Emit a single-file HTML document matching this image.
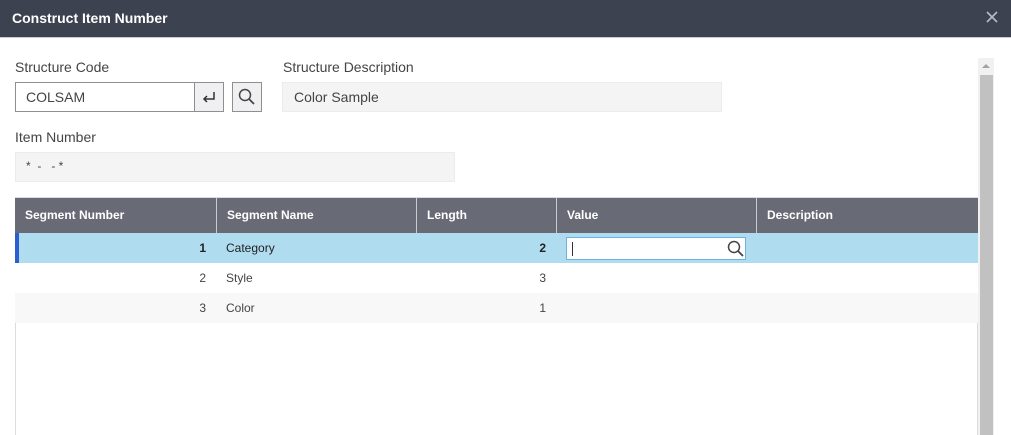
<!DOCTYPE html><html style="overflow:hidden;height:435px"><head><style>
body{margin:0;width:1011px;height:435px;overflow:hidden;background:#fff;font-family:"Liberation Sans",Arial,sans-serif;position:relative}
.a{position:absolute}
.hdr{left:0;top:0;width:1011px;height:38px;background:#3d4250;border-bottom:1px solid #c9ccd2;box-sizing:border-box}
.lbl{font-size:14px;color:#444}
.ro{background:#f4f4f4;border:1px solid #ececec;box-sizing:border-box;font-size:14px;color:#444}
.th{top:198px;height:35px;background:#686b76;color:#fff;font-weight:bold;font-size:12px;line-height:35px;box-sizing:border-box;padding-left:10px;border-right:1px solid #c9cbd0}
.row{left:15px;width:963px;height:30px;font-size:12px;color:#444;line-height:30px}
.c{position:absolute;top:0}
</style></head><body>
<div class="a hdr"></div>
<div class="a" style="left:12px;top:10px;color:#fff;font-weight:bold;font-size:14px">Construct Item Number</div>
<svg class="a" style="left:986px;top:11px" width="12" height="12"><path d="M1 1L11 11M11 1L1 11" stroke="#b8bcc4" stroke-width="1.6"/></svg>

<div class="a lbl" style="left:15px;top:59px">Structure Code</div>
<div class="a" style="left:15px;top:82px;width:209px;height:30px;border:1px solid #8f8f8f;box-sizing:border-box;font-size:14px;color:#444;line-height:28px;padding-left:10px">COLSAM</div>
<div class="a" style="left:194px;top:82px;width:30px;height:30px;border:1px solid #8f8f8f;box-sizing:border-box;background:#f0f0f2"></div>
<svg class="a" style="left:201px;top:90px" width="16" height="14"><path d="M13 2V9H3M6 6L3 9L6 12" fill="none" stroke="#333" stroke-width="1.5"/></svg>
<div class="a" style="left:232px;top:82px;width:30px;height:30px;border:1px solid #8f8f8f;box-sizing:border-box;background:#f0f0f2"></div>
<svg class="a" style="left:238px;top:88px" width="18" height="18"><circle cx="7" cy="7" r="5.5" fill="none" stroke="#444" stroke-width="1.5"/><path d="M11 11L16 16" stroke="#444" stroke-width="1.8"/></svg>

<div class="a lbl" style="left:283px;top:59px">Structure Description</div>
<div class="a ro" style="left:282px;top:82px;width:440px;height:30px;line-height:28px;padding-left:11px">Color Sample</div>

<div class="a lbl" style="left:15px;top:129px">Item Number</div>
<div class="a ro" style="left:15px;top:152px;width:440px;height:30px;line-height:26px;padding-left:10px;font-size:12px">*&nbsp; -&nbsp;&nbsp; - *</div>

<div class="a" style="left:15px;top:197px;width:963px;height:238px;border:1px solid #dcdcdc;border-bottom:none;box-sizing:border-box"></div>
<div class="a th" style="left:15px;width:202px">Segment Number</div>
<div class="a th" style="left:217px;width:200px">Segment Name</div>
<div class="a th" style="left:417px;width:140px">Length</div>
<div class="a th" style="left:557px;width:200px">Value</div>
<div class="a th" style="left:757px;width:221px;border-right:none">Description</div>

<div class="a row" style="top:233px;background:#b0dcf0;color:#222">
<div class="c" style="left:0;width:4px;height:30px;background:#2b5fd0"></div>
<div class="c" style="left:0;width:191px;text-align:right;font-weight:bold">1</div>
<div class="c" style="left:211px">Category</div>
<div class="c" style="left:402px;width:129px;text-align:right;font-weight:bold">2</div>
<div class="c" style="left:551px;top:4px;width:180px;height:23px;background:#fff;border:1px solid #6cb0e6;box-sizing:border-box"><div style="position:absolute;left:5px;top:4px;width:1px;height:14px;background:#333"></div>
<svg style="position:absolute;left:160px;top:2px" width="18" height="18"><circle cx="7" cy="7" r="5.5" fill="none" stroke="#444" stroke-width="1.5"/><path d="M11 11L16 16" stroke="#444" stroke-width="1.8"/></svg></div>
</div>
<div class="a row" style="top:263px;background:#fff">
<div class="c" style="left:0;width:191px;text-align:right">2</div>
<div class="c" style="left:211px">Style</div>
<div class="c" style="left:402px;width:129px;text-align:right">3</div></div>
<div class="a row" style="top:293px;background:#f8f8f8">
<div class="c" style="left:0;width:191px;text-align:right">3</div>
<div class="c" style="left:211px">Color</div>
<div class="c" style="left:402px;width:129px;text-align:right">1</div></div>

<div class="a" style="left:978px;top:58px;width:16px;height:377px;background:#f1f1f1"></div>
<div class="a" style="left:980px;top:75px;width:13px;height:360px;background:#c1c1c1"></div>
<svg class="a" style="left:981px;top:63px" width="10" height="6"><path d="M1 5L5 1L9 5Z" fill="#a3a3a3"/></svg>
</body></html>
